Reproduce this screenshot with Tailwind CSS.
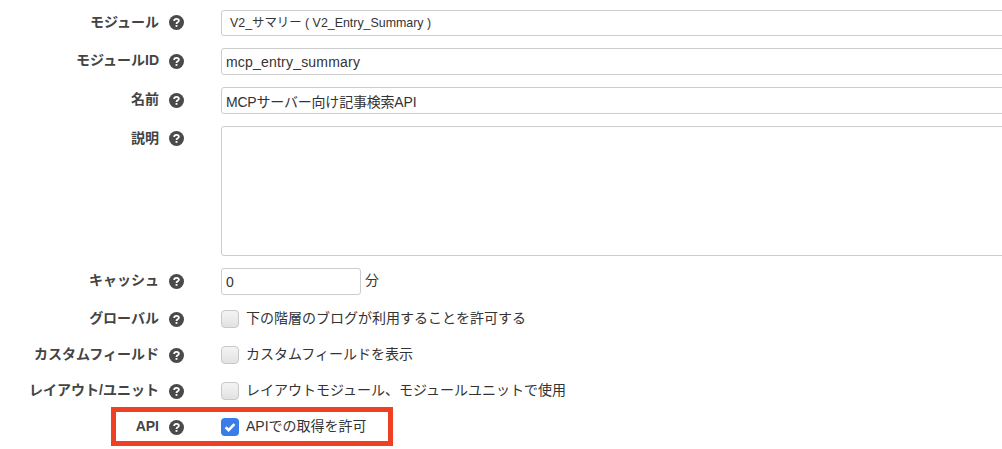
<!DOCTYPE html>
<html lang="ja">
<head>
  <meta charset="UTF-8">
  <title>モジュール設定</title>
  <script src="https://cdn.jsdelivr.net/npm/@tailwindcss/browser@4"></script>
</head>
<body class="bg-white overflow-hidden">
<div class="relative w-[1002px] h-[449px] overflow-hidden pt-[10px] text-[#333] font-['Liberation_Sans','Noto_Sans_CJK_JP',sans-serif]">

  <!-- モジュール -->
  <div class="flex items-center h-[26px] mb-[12px]">
    <div class="w-[159px] shrink-0 text-right text-[14px] font-bold text-[#444] -mt-[2px]">モジュール</div>
    <div class="w-[62px] shrink-0 pl-[10px] -mt-[1px]"><svg class="w-[15px] h-[15px]" viewBox="0 0 16 16"><circle cx="8" cy="8" r="8" fill="#4a4a4a"/><path d="M5.5 6.3c0-1.4 1-2.2 2.5-2.2s2.5.8 2.5 2c0 1.8-2.5 1.7-2.5 3.4" fill="none" stroke="#fff" stroke-width="1.9"/><path d="M7 10.7h2v1.9H7z" fill="#fff"/></svg></div>
    <div class="w-[800px] h-[26px] shrink-0 border border-[#ccc] rounded-[3px] bg-white pl-[8px] flex items-center text-[12.4px] text-[#333]">V2_サマリー ( V2_Entry_Summary )</div>
  </div>

  <!-- モジュールID -->
  <div class="flex items-center h-[27px] mb-[12px]">
    <div class="w-[159px] shrink-0 text-right text-[14px] font-bold text-[#444] -mt-[2px]">モジュールID</div>
    <div class="w-[62px] shrink-0 pl-[10px] -mt-[1px]"><svg class="w-[15px] h-[15px]" viewBox="0 0 16 16"><circle cx="8" cy="8" r="8" fill="#4a4a4a"/><path d="M5.5 6.3c0-1.4 1-2.2 2.5-2.2s2.5.8 2.5 2c0 1.8-2.5 1.7-2.5 3.4" fill="none" stroke="#fff" stroke-width="1.9"/><path d="M7 10.7h2v1.9H7z" fill="#fff"/></svg></div>
    <input class="w-[800px] h-[27px] shrink-0 border border-[#ccc] rounded-[3px] px-[4px] text-[14px] tracking-[0.2px] text-[#333]" value="mcp_entry_summary">
  </div>

  <!-- 名前 -->
  <div class="flex items-center h-[27px] mb-[12px]">
    <div class="w-[159px] shrink-0 text-right text-[14px] font-bold text-[#444] -mt-[2px]">名前</div>
    <div class="w-[62px] shrink-0 pl-[10px] -mt-[1px]"><svg class="w-[15px] h-[15px]" viewBox="0 0 16 16"><circle cx="8" cy="8" r="8" fill="#4a4a4a"/><path d="M5.5 6.3c0-1.4 1-2.2 2.5-2.2s2.5.8 2.5 2c0 1.8-2.5 1.7-2.5 3.4" fill="none" stroke="#fff" stroke-width="1.9"/><path d="M7 10.7h2v1.9H7z" fill="#fff"/></svg></div>
    <input class="w-[800px] h-[27px] shrink-0 border border-[#ccc] rounded-[3px] px-[4px] text-[14px] tracking-[-0.2px] text-[#333]" value="MCPサーバー向け記事検索API">
  </div>

  <!-- 説明 -->
  <div class="flex items-start h-[131px] mb-[11px]">
    <div class="w-[159px] shrink-0 text-right text-[14px] font-bold text-[#444] pt-[2px]">説明</div>
    <div class="w-[62px] shrink-0 pl-[10px] pt-[5px]"><svg class="w-[15px] h-[15px]" viewBox="0 0 16 16"><circle cx="8" cy="8" r="8" fill="#4a4a4a"/><path d="M5.5 6.3c0-1.4 1-2.2 2.5-2.2s2.5.8 2.5 2c0 1.8-2.5 1.7-2.5 3.4" fill="none" stroke="#fff" stroke-width="1.9"/><path d="M7 10.7h2v1.9H7z" fill="#fff"/></svg></div>
    <textarea class="w-[800px] h-[130px] shrink-0 border border-[#ccc] rounded-[3px] resize-none"></textarea>
  </div>

  <!-- キャッシュ -->
  <div class="flex items-center h-[27px] mb-[15px]">
    <div class="w-[159px] shrink-0 text-right text-[14px] font-bold text-[#444] -mt-[2px]">キャッシュ</div>
    <div class="w-[62px] shrink-0 pl-[10px] -mt-[1px]"><svg class="w-[15px] h-[15px]" viewBox="0 0 16 16"><circle cx="8" cy="8" r="8" fill="#4a4a4a"/><path d="M5.5 6.3c0-1.4 1-2.2 2.5-2.2s2.5.8 2.5 2c0 1.8-2.5 1.7-2.5 3.4" fill="none" stroke="#fff" stroke-width="1.9"/><path d="M7 10.7h2v1.9H7z" fill="#fff"/></svg></div>
    <input class="w-[140px] h-[27px] shrink-0 border border-[#ccc] rounded-[3px] px-[4px] text-[14px] text-[#333]" value="0">
    <span class="ml-[4px] text-[14px] -mt-[3px]">分</span>
  </div>

  <!-- グローバル -->
  <div class="flex items-center h-[18px] mb-[18px]">
    <div class="w-[159px] shrink-0 text-right text-[14px] font-bold text-[#444] -mt-[2px]">グローバル</div>
    <div class="w-[62px] shrink-0 pl-[10px]"><svg class="w-[15px] h-[15px]" viewBox="0 0 16 16"><circle cx="8" cy="8" r="8" fill="#4a4a4a"/><path d="M5.5 6.3c0-1.4 1-2.2 2.5-2.2s2.5.8 2.5 2c0 1.8-2.5 1.7-2.5 3.4" fill="none" stroke="#fff" stroke-width="1.9"/><path d="M7 10.7h2v1.9H7z" fill="#fff"/></svg></div>
    <span class="w-[18px] h-[18px] shrink-0 rounded-[4px] border border-[#c8c8c8] bg-gradient-to-b from-[#f4f4f4] to-[#e2e2e2]"></span>
    <span class="ml-[7px] text-[14px] -mt-[1px]">下の階層のブログが利用することを許可する</span>
  </div>

  <!-- カスタムフィールド -->
  <div class="flex items-center h-[18px] mb-[18px]">
    <div class="w-[159px] shrink-0 text-right text-[14px] font-bold text-[#444] -mt-[2px]">カスタムフィールド</div>
    <div class="w-[62px] shrink-0 pl-[10px]"><svg class="w-[15px] h-[15px]" viewBox="0 0 16 16"><circle cx="8" cy="8" r="8" fill="#4a4a4a"/><path d="M5.5 6.3c0-1.4 1-2.2 2.5-2.2s2.5.8 2.5 2c0 1.8-2.5 1.7-2.5 3.4" fill="none" stroke="#fff" stroke-width="1.9"/><path d="M7 10.7h2v1.9H7z" fill="#fff"/></svg></div>
    <span class="w-[18px] h-[18px] shrink-0 rounded-[4px] border border-[#c8c8c8] bg-gradient-to-b from-[#f4f4f4] to-[#e2e2e2]"></span>
    <span class="ml-[7px] text-[14px] -mt-[1px]">カスタムフィールドを表示</span>
  </div>

  <!-- レイアウト/ユニット -->
  <div class="flex items-center h-[18px] mb-[18px]">
    <div class="w-[159px] shrink-0 text-right text-[14px] font-bold text-[#444] -mt-[2px]">レイアウト/ユニット</div>
    <div class="w-[62px] shrink-0 pl-[10px]"><svg class="w-[15px] h-[15px]" viewBox="0 0 16 16"><circle cx="8" cy="8" r="8" fill="#4a4a4a"/><path d="M5.5 6.3c0-1.4 1-2.2 2.5-2.2s2.5.8 2.5 2c0 1.8-2.5 1.7-2.5 3.4" fill="none" stroke="#fff" stroke-width="1.9"/><path d="M7 10.7h2v1.9H7z" fill="#fff"/></svg></div>
    <span class="w-[18px] h-[18px] shrink-0 rounded-[4px] border border-[#c8c8c8] bg-gradient-to-b from-[#f4f4f4] to-[#e2e2e2]"></span>
    <span class="ml-[7px] text-[14px] -mt-[1px]">レイアウトモジュール、モジュールユニットで使用</span>
  </div>

  <!-- API -->
  <div class="flex items-center h-[18px]">
    <div class="w-[159px] shrink-0 text-right text-[14px] font-bold text-[#444] -mt-[2px]">API</div>
    <div class="w-[62px] shrink-0 pl-[10px]"><svg class="w-[15px] h-[15px]" viewBox="0 0 16 16"><circle cx="8" cy="8" r="8" fill="#4a4a4a"/><path d="M5.5 6.3c0-1.4 1-2.2 2.5-2.2s2.5.8 2.5 2c0 1.8-2.5 1.7-2.5 3.4" fill="none" stroke="#fff" stroke-width="1.9"/><path d="M7 10.7h2v1.9H7z" fill="#fff"/></svg></div>
    <span class="w-[18px] h-[18px] shrink-0 rounded-[4px] bg-[#3b7de8] flex items-center justify-center"><svg class="w-[14px] h-[14px]" viewBox="0 0 14 14"><path d="M2.6 7.2l3 2.9 5.8-6" fill="none" stroke="#fff" stroke-width="2.6"/></svg></span>
    <span class="ml-[7px] text-[14px] -mt-[1px]">APIでの取得を許可</span>
  </div>

  <!-- 赤枠の注釈 -->
  <div class="absolute left-[111px] top-[407px] w-[282px] h-[39px] border-[5px] border-[#ee4023]"></div>
</div>
</body>
</html>
